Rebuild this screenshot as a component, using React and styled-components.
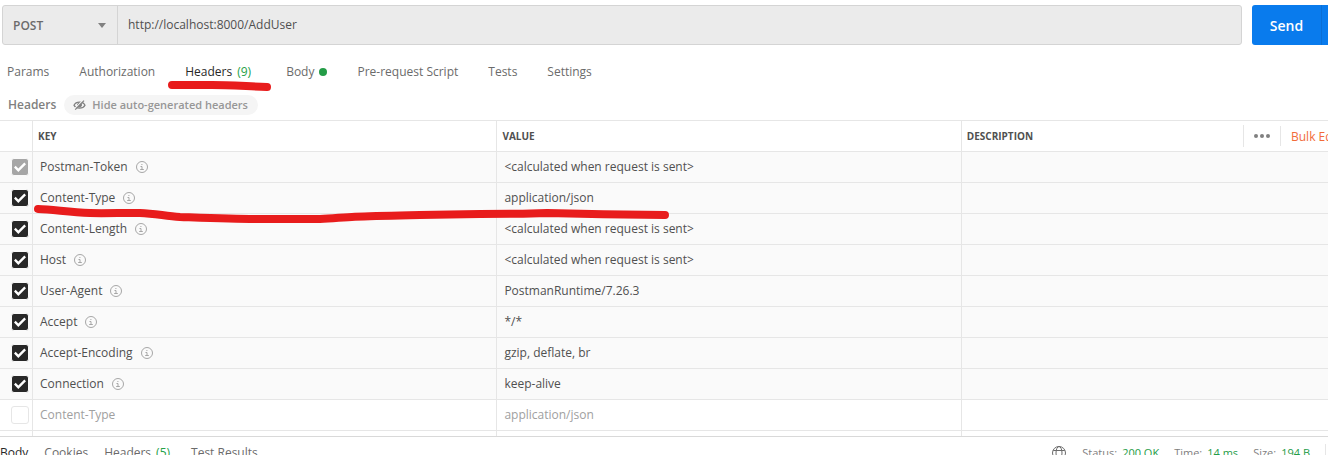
import { Fragment } from 'react';
import styled, { createGlobalStyle } from 'styled-components';

const GlobalStyle = createGlobalStyle`
  * {
    box-sizing: border-box;
  }

  body {
    margin: 0;
    overflow: hidden;
    background: #fff;
  }

  button, input, select {
    font: inherit;
    color: inherit;
  }
`;

const Page = styled.div`
  height: 100vh;
  overflow: hidden;
  display: flex;
  flex-direction: column;
  color: #505050;
  font-family: 'Open Sans', 'Noto Sans', sans-serif;
  font-size: 12px;
  line-height: 16px;
`;

const RequestBar = styled.form`
  display: flex;
  flex: none;
  height: 45px;
  padding: 5px 0 0 2px;
`;

const UrlGroup = styled.div`
  display: flex;
  flex: 1;
  min-width: 0;
  margin-right: 10px;
  background: #ebebeb;
  border: 1px solid #d4d4d4;
  border-radius: 3px;
`;

const MethodBox = styled.div`
  display: flex;
  align-items: center;
  width: 115px;
  padding-right: 11px;
  border-right: 1px solid #d4d4d4;
`;

const Method = styled.select`
  flex: 1;
  min-width: 0;
  height: 38px;
  padding: 2px 0 0 10px;
  border: 0;
  background: none;
  appearance: none;
  font-weight: 600;
  color: #6b6b6b;
`;

const UrlInput = styled.input`
  flex: 1;
  min-width: 0;
  padding: 0 10px;
  border: 0;
  background: none;
`;

const SendGroup = styled.div`
  display: flex;
  flex: none;
  width: 76px;
  overflow: hidden;
  background: #097bed;
  border-radius: 3px 0 0 3px;
  color: #fff;
`;

const SendButton = styled.button`
  flex: none;
  width: 70px;
  padding: 2px 0 0;
  border: 0;
  border-right: 1px solid #0a6fd6;
  background: none;
  font-size: 14px;
  font-weight: 600;
`;

const SendMenu = styled.button`
  flex: none;
  width: 32px;
  border: 0;
  background: none;
`;

const Tabs = styled.nav`
  display: flex;
  flex: none;
  gap: 30px;
  padding: 19px 7px 0;
  height: 49px;
`;

const Tab = styled.a`
  position: relative;
  display: flex;
  align-items: center;
  height: 16px;
  white-space: nowrap;
  text-decoration: none;
  color: ${(props) => (props.$active ? '#282828' : '#6b6b6b')};
`;

const Count = styled.span`
  margin: 0 5px;
  color: #26a148;
`;

const Dot = styled.span`
  width: 8px;
  height: 8px;
  margin-left: 5px;
  border-radius: 50%;
  background: #249c47;
`;

const SubHeader = styled.div`
  display: flex;
  flex: none;
  align-items: center;
  gap: 8px;
  height: 22px;
  padding-left: 8px;
  margin-bottom: 4px;
  font-weight: 600;
  color: #808080;
`;

const HideButton = styled.button`
  display: flex;
  align-items: center;
  gap: 6px;
  height: 20px;
  padding: 0 10px 0 9px;
  border: 0;
  border-radius: 10px;
  background: #f5f5f5;
  font-size: 11px;
  font-weight: 600;
  color: #979797;
`;

const TableArea = styled.div`
  flex: 1;
  min-height: 0;
  overflow: hidden;
`;

const Table = styled.table`
  width: 100%;
  table-layout: fixed;
  border-collapse: separate;
  border-spacing: 0;
  border-top: 1px solid #e6e6e6;
`;

const CheckCol = styled.col`
  width: 33px;
`;

const DataCol = styled.col`
  width: 34.97%;
`;

const HeadCell = styled.th`
  height: 31px;
  padding: 0 0 0 5px;
  border-bottom: 1px solid #e6e6e6;
  border-right: ${(props) => (props.$last ? 0 : '1px solid #e6e6e6')};
  text-align: left;
  font-size: 10px;
  font-weight: 700;
`;

const HeadTools = styled.div`
  display: flex;
  align-items: center;
  overflow: hidden;
`;

const ToolGroup = styled.div`
  display: flex;
  align-items: center;
  width: 85px;
  margin-left: auto;
  overflow: hidden;
`;

const ToolButton = styled.button`
  display: flex;
  align-items: center;
  flex: none;
  height: ${(props) => (props.$bulk ? '20px' : '22px')};
  padding: ${(props) => (props.$bulk ? '2px 10px 0' : '0 10px')};
  border: 0;
  border-left: 1px solid #e6e6e6;
  background: none;
  font-size: 12px;
  font-weight: 400;
  color: ${(props) => (props.$bulk ? '#f26b3a' : '#808080')};
`;

const Row = styled.tr`
  background: ${(props) => (props.$blank ? '#fff' : '#fafafa')};
  color: ${(props) => (props.$blank ? '#a0a0a0' : '#505050')};
`;

const Cell = styled.td`
  position: relative;
  height: 31px;
  padding: 0 0 0 7px;
  border-bottom: 1px solid #e6e6e6;
  border-right: ${(props) => (props.$last ? 0 : '1px solid #e6e6e6')};
  white-space: nowrap;
`;

const CheckCell = styled(Cell)`
  padding-left: 11px;
`;

const KeyLine = styled.div`
  display: flex;
  align-items: center;
  gap: 8px;
`;

const Checkbox = styled.input`
  display: grid;
  place-content: center;
  appearance: none;
  width: 18px;
  height: 18px;
  margin: 0;
  border: 1px solid #e6e6e6;
  border-radius: 3px;
  background: #fff;

  &:checked {
    border-color: #fafafa;
    background: #282828;
  }

  &:checked:disabled {
    background: #a6a6a6;
  }

  &:checked::before {
    content: '';
    width: 12px;
    height: 12px;
    background: #fff;
    clip-path: polygon(0 55%, 14% 40%, 36% 62%, 86% 12%, 100% 27%, 36% 91%);
  }
`;

const Marker = styled.svg`
  position: absolute;
  z-index: 1;
  top: ${(props) => props.$top}px;
  left: ${(props) => props.$left}px;
  fill: none;
  stroke: #e81c1c;
  stroke-width: 8;
  stroke-linecap: round;
  stroke-linejoin: round;
  pointer-events: none;
`;

const ResponseBar = styled.footer`
  display: flex;
  flex: none;
  align-items: flex-start;
  height: 19px;
  overflow: hidden;
  border-top: 1px solid #d9d9d9;
`;

const ResponseTabs = styled.nav`
  display: flex;
  flex: 1;
  gap: 16px;
  padding-top: 8px;
`;

const Stats = styled.dl`
  display: flex;
  margin: 0;
  padding: 8px 15px 0 0;
  font-size: 11px;
  color: #808080;
`;

const Globe = styled.svg`
  flex: none;
  margin: 9px 16px 0 0;
`;

const StatName = styled.dt`
  margin-right: 5px;
`;

const StatValue = styled.dd`
  margin: 0 15px 0 0;
  color: #249c47;

  &:last-child {
    margin-right: 0;
  }
`;

const Edge = styled.span`
  width: 3px;
  height: 20px;
  margin-top: 7px;
  border-left: 1px solid #e6e6e6;
`;

const InfoIcon = () => (
  <svg width="12" height="12" viewBox="0 0 12 12" fill="none" stroke="#a6a6a6">
    <circle cx="6" cy="6" r="5.5" />
    <path d="M4.5 5.5H6V8.5M4.2 8.5H7.8M5.4 3.5H6.4" />
  </svg>
);

const HiddenEyeIcon = () => (
  <svg width="13" height="12" viewBox="0 0 13 12" fill="none" stroke="#808080">
    <path d="M1 6.2C3 2.2 10 2.2 12 6.2C10 10 3 10 1 6.2Z" strokeWidth="1.3" />
    <circle cx="6.5" cy="6" r="2" fill="#808080" />
    <path d="M1.6 9.6L10.4 1" stroke="#f5f5f5" strokeWidth="1.2" />
    <path d="M2.2 10.6L11 1.6" strokeWidth="1.2" />
  </svg>
);

const rows = [
  { key: 'Postman-Token', value: '<calculated when request is sent>', locked: true },
  { key: 'Content-Type', value: 'application/json', marked: true },
  { key: 'Content-Length', value: '<calculated when request is sent>' },
  { key: 'Host', value: '<calculated when request is sent>' },
  { key: 'User-Agent', value: 'PostmanRuntime/7.26.3' },
  { key: 'Accept', value: '*/*' },
  { key: 'Accept-Encoding', value: 'gzip, deflate, br' },
  { key: 'Connection', value: 'keep-alive' },
  { key: 'Content-Type', value: 'application/json', blank: true },
  { key: '', value: '', blank: true, empty: true },
];

const stats = [
  ['Status:', '200 OK'],
  ['Time:', '14 ms'],
  ['Size:', '194 B'],
];

const HeaderRow = ({ row }) => (
  <Row $blank={row.blank}>
    <CheckCell>
      {!row.empty && (
        <Checkbox
          type="checkbox"
          aria-label={row.key}
          defaultChecked={!row.blank}
          disabled={row.locked}
        />
      )}
    </CheckCell>
    <Cell>
      <KeyLine>
        {row.key}
        {!row.blank && <InfoIcon />}
      </KeyLine>
      {row.marked && (
        <Marker $top={18} $left={0} width="640" height="24">
          <path d="M5 8C20 8.5 35 11 57 12C75 12.5 95 11.5 107 12C122 12.5 132 15 147 16C175 17 200 18 222 18H287C300 17.5 310 16.2 322 15.7C340 15 365 14.5 387 14L447 13L490 12.8L514 12L570 13.2L632 14" />
        </Marker>
      )}
    </Cell>
    <Cell>{row.value}</Cell>
    <Cell $last />
  </Row>
);

const App = () => (
  <Page>
    <GlobalStyle />
    <RequestBar onSubmit={(e) => e.preventDefault()}>
      <UrlGroup>
        <MethodBox>
          <Method aria-label="Method" defaultValue="POST">
            <option>GET</option>
            <option>POST</option>
          </Method>
          <svg width="8" height="5" viewBox="0 0 8 5" fill="#808080">
            <path d="M0 0H8L4 5Z" />
          </svg>
        </MethodBox>
        <UrlInput aria-label="Request URL" defaultValue="http://localhost:8000/AddUser" />
      </UrlGroup>
      <SendGroup>
        <SendButton type="submit">Send</SendButton>
        <SendMenu type="button" aria-label="Send options" />
      </SendGroup>
    </RequestBar>

    <Tabs>
      <Tab href="#params">Params</Tab>
      <Tab href="#authorization">Authorization</Tab>
      <Tab href="#headers" $active>
        Headers <Count>(9)</Count>
        <Marker $top={14} $left={-18} width="106" height="16">
          <path d="M5 7H45C60 7 75 8 100 9" />
        </Marker>
      </Tab>
      <Tab href="#body">
        Body <Dot />
      </Tab>
      <Tab href="#pre-request">Pre-request Script</Tab>
      <Tab href="#tests">Tests</Tab>
      <Tab href="#settings">Settings</Tab>
    </Tabs>

    <SubHeader>
      Headers
      <HideButton type="button">
        <HiddenEyeIcon />
        Hide auto-generated headers
      </HideButton>
    </SubHeader>

    <TableArea>
      <Table>
        <colgroup>
          <CheckCol />
          <DataCol />
          <DataCol />
          <col />
        </colgroup>
        <thead>
          <tr>
            <HeadCell />
            <HeadCell>KEY</HeadCell>
            <HeadCell>VALUE</HeadCell>
            <HeadCell $last>
              <HeadTools>
                DESCRIPTION
                <ToolGroup>
                  <ToolButton type="button" aria-label="More columns">
                    <svg width="16" height="4" viewBox="0 0 16 4" fill="#808080">
                      <circle cx="2" cy="2" r="2" />
                      <circle cx="8" cy="2" r="2" />
                      <circle cx="14" cy="2" r="2" />
                    </svg>
                  </ToolButton>
                  <ToolButton type="button" $bulk>
                    Bulk Edit
                  </ToolButton>
                </ToolGroup>
              </HeadTools>
            </HeadCell>
          </tr>
        </thead>
        <tbody>
          {rows.map((row, i) => (
            <HeaderRow key={i} row={row} />
          ))}
        </tbody>
      </Table>
    </TableArea>

    <ResponseBar>
      <ResponseTabs>
        <Tab href="#response-body" $active>
          Body
        </Tab>
        <Tab href="#cookies">Cookies</Tab>
        <Tab href="#response-headers">
          Headers <Count>(5)</Count>
        </Tab>
        <Tab href="#test-results">Test Results</Tab>
      </ResponseTabs>
      <Globe width="14" height="14" viewBox="0 0 14 14" fill="none" stroke="#6b6b6b">
        <circle cx="7" cy="7" r="6.5" />
        <ellipse cx="7" cy="7" rx="3" ry="6.5" />
        <path d="M1.2 4.5H12.8M1.2 9.5H12.8" />
      </Globe>
      <Stats>
        {stats.map(([name, value]) => (
          <Fragment key={name}>
            <StatName>{name}</StatName>
            <StatValue>{value}</StatValue>
          </Fragment>
        ))}
      </Stats>
      <Edge />
    </ResponseBar>
  </Page>
);

export default App;
